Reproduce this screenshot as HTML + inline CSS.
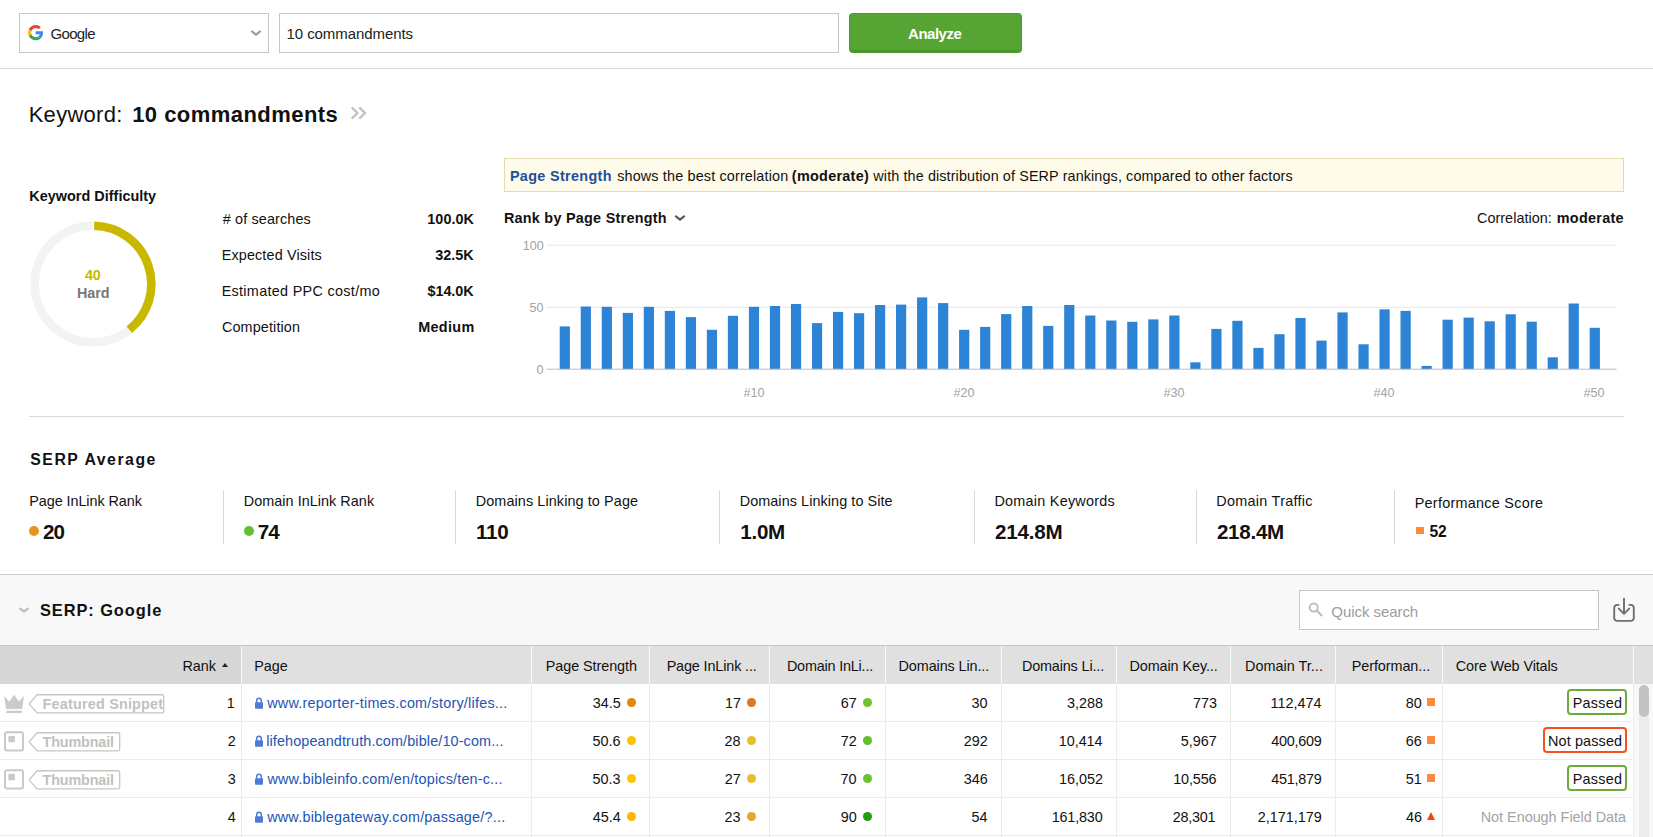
<!DOCTYPE html><html><head><meta charset="utf-8"><title>Keyword Difficulty</title><style>
*{box-sizing:border-box;margin:0;padding:0}
html,body{width:1653px;height:837px;overflow:hidden;background:#fff}
body{font-family:"Liberation Sans",Arial,sans-serif;font-size:14.4px;color:#000;position:relative}
.a{position:absolute}
.t{position:absolute;white-space:nowrap;line-height:1}
b,.b{font-weight:bold}
</style></head><body>
<div class="a" style="left:19px;top:13px;width:250px;height:40px;border:1px solid #c6c6c6;background:#fff"></div>
<svg class="a" style="left:28px;top:25.3px" width="15.3" height="15.3" viewBox="0 0 48 48"><path fill="#EA4335" d="M24 9.5c3.54 0 6.71 1.22 9.21 3.6l6.85-6.85C35.9 2.38 30.47 0 24 0 14.62 0 6.51 5.38 2.56 13.22l7.98 6.19C12.43 13.72 17.74 9.5 24 9.5z"/><path fill="#4285F4" d="M46.98 24.55c0-1.57-.15-3.09-.38-4.55H24v9.02h12.94c-.58 2.96-2.26 5.48-4.78 7.18l7.73 6c4.51-4.18 7.09-10.36 7.09-17.65z"/><path fill="#FBBC05" d="M10.53 28.59c-.48-1.45-.76-2.99-.76-4.59s.27-3.14.76-4.59l-7.98-6.19C.92 16.460 0 20.120 0 24c0 3.880.920 7.540 2.560 10.780l7.970-6.190z"/><path fill="#34A853" d="M24 48c6.480 0 11.930-2.130 15.890-5.810l-7.730-6c-2.150 1.450-4.920 2.300-8.160 2.300-6.260 0-11.570-4.220-13.470-9.910l-7.980 6.190C6.510 42.620 14.620 48 24 48z"/></svg>
<div class="t" style="top:26.30px;font-size:15px;color:#222;letter-spacing:-0.640px;left:50.41px;">Google</div>
<svg class="a" style="left:250px;top:29px" width="12" height="9" viewBox="0 0 12 9"><path d="M2 2.500 L6 5.700 L10 2.500" fill="none" stroke="#9a9a9a" stroke-width="2.2" stroke-linecap="round" stroke-linejoin="round"/></svg>
<div class="a" style="left:279px;top:13px;width:560px;height:40px;border:1px solid #c6c6c6;background:#fff"></div>
<div class="t" style="top:26.30px;font-size:15px;color:#222;letter-spacing:-0.078px;left:286.55px;">10 commandments</div>
<div class="a" style="left:849px;top:13px;width:173px;height:40px;border-radius:3.500px;background:#56a433;border:1px solid #4c962b;box-shadow:inset 0 -2px 0 #4b952c"></div>
<div class="t" style="top:26.30px;font-size:15px;color:#fff;letter-spacing:-0.501px;font-weight:bold;left:908.11px;">Analyze</div>
<div class="a" style="left:0px;top:68px;width:1653px;height:1px;background:#dadada"></div>
<div class="t" style="top:103.68px;font-size:22px;color:#111;letter-spacing:0.284px;left:28.67px;">Keyword:</div>
<div class="t" style="top:103.68px;font-size:22px;color:#111;letter-spacing:0.452px;font-weight:bold;left:132.20px;">10 commandments</div>
<svg class="a" style="left:350px;top:105px" width="18" height="16" viewBox="0 0 18 16"><path d="M2.400 3.100 L7.600 8 L2.400 12.900 M9.900 3.100 L15.100 8 L9.900 12.900" fill="none" stroke="#c2c2c2" stroke-width="2.400" stroke-linecap="round" stroke-linejoin="round"/></svg>
<div class="t" style="top:188.81px;font-size:14.4px;color:#111;letter-spacing:0.023px;font-weight:bold;left:29.36px;">Keyword Difficulty</div>
<svg class="a" style="left:22.600px;top:213.800px" width="140" height="140" viewBox="0 0 140 140"><circle cx="70" cy="70" r="58.300" fill="none" stroke="#f3f3f3" stroke-width="8.600"/><path d="M70 11.700 A58.300 58.300 0 0 1 107.240 114.850" fill="none" stroke="#fff" stroke-width="9.400"/><path d="M71.200 11.710 A58.300 58.300 0 0 1 106.300 115.620" fill="none" stroke="#c8b900" stroke-width="8.600"/></svg>
<div class="t" style="top:267.81px;font-size:14.4px;color:#c8b900;letter-spacing:-0.372px;font-weight:bold;left:85.00px;">40</div>
<div class="t" style="top:285.81px;font-size:14.4px;color:#777;letter-spacing:-0.074px;font-weight:bold;left:77.04px;">Hard</div>
<div class="t" style="top:211.81px;font-size:14.4px;color:#111;letter-spacing:0.139px;left:222.72px;"># of searches</div>
<div class="t" style="top:211.81px;font-size:14.4px;color:#111;letter-spacing:0.046px;font-weight:bold;right:1179.03px;">100.0K</div>
<div class="t" style="top:247.81px;font-size:14.4px;color:#111;letter-spacing:0.141px;left:221.68px;">Expected Visits</div>
<div class="t" style="top:247.81px;font-size:14.4px;color:#111;font-weight:bold;right:1179.30px;">32.5K</div>
<div class="t" style="top:283.81px;font-size:14.4px;color:#111;letter-spacing:0.309px;left:221.64px;">Estimated PPC cost/mo</div>
<div class="t" style="top:283.81px;font-size:14.4px;color:#111;letter-spacing:-0.064px;font-weight:bold;right:1179.44px;">$14.0K</div>
<div class="t" style="top:319.81px;font-size:14.4px;color:#111;letter-spacing:0.121px;left:221.96px;">Competition</div>
<div class="t" style="top:319.81px;font-size:14.4px;color:#111;letter-spacing:0.326px;font-weight:bold;right:1178.48px;">Medium</div>
<div class="a" style="left:504px;top:158px;width:1120px;height:34px;background:#fffbea;border:1px solid #e4dab2"></div>
<div class="t" style="top:169.01px;font-size:14.4px;color:#1f4e9c;letter-spacing:0.331px;font-weight:bold;left:509.91px;">Page Strength</div>
<div class="t" style="top:169.01px;font-size:14.4px;color:#111;letter-spacing:0.154px;left:617.16px;">shows the best correlation</div>
<div class="t" style="top:169.01px;font-size:14.4px;color:#111;letter-spacing:0.283px;font-weight:bold;left:791.87px;">(moderate)</div>
<div class="t" style="top:169.01px;font-size:14.4px;color:#111;letter-spacing:0.106px;left:873.36px;">with the distribution of SERP rankings, compared to other factors</div>
<div class="t" style="top:211.01px;font-size:14.4px;color:#111;letter-spacing:0.260px;font-weight:bold;left:503.88px;">Rank by Page Strength</div>
<svg class="a" style="left:674px;top:214px" width="12" height="8" viewBox="0 0 12 8"><path d="M1.900 2.400 L6 5.700 L10.100 2.400" fill="none" stroke="#5a5a5a" stroke-width="2.300" stroke-linecap="round" stroke-linejoin="round"/></svg>
<div class="t" style="top:211.01px;font-size:14.4px;color:#111;letter-spacing:0.042px;left:1476.97px;">Correlation:</div>
<div class="t" style="top:211.01px;font-size:14.4px;color:#111;letter-spacing:0.272px;font-weight:bold;left:1556.80px;">moderate</div>
<svg class="a" style="left:500px;top:235px" width="1130" height="170" viewBox="0 0 1130 170"><rect x="46.500" y="9.700" width="1070" height="1" fill="#e6e6e6"/><rect x="46.500" y="71.800" width="1070" height="1" fill="#e6e6e6"/><rect x="59.70" y="91.4" width="10.2" height="42.8" fill="#2d83d5"/><rect x="80.72" y="71.5" width="10.2" height="62.7" fill="#2d83d5"/><rect x="101.74" y="71.8" width="10.2" height="62.4" fill="#2d83d5"/><rect x="122.76" y="77.9" width="10.2" height="56.3" fill="#2d83d5"/><rect x="143.78" y="71.8" width="10.2" height="62.4" fill="#2d83d5"/><rect x="164.80" y="75.9" width="10.2" height="58.3" fill="#2d83d5"/><rect x="185.82" y="82.1" width="10.2" height="52.1" fill="#2d83d5"/><rect x="206.84" y="94.8" width="10.2" height="39.4" fill="#2d83d5"/><rect x="227.86" y="80.8" width="10.2" height="53.4" fill="#2d83d5"/><rect x="248.88" y="71.8" width="10.2" height="62.4" fill="#2d83d5"/><rect x="269.90" y="71.0" width="10.2" height="63.2" fill="#2d83d5"/><rect x="290.92" y="69.0" width="10.2" height="65.2" fill="#2d83d5"/><rect x="311.94" y="88.1" width="10.2" height="46.1" fill="#2d83d5"/><rect x="332.96" y="76.9" width="10.2" height="57.3" fill="#2d83d5"/><rect x="353.98" y="78.2" width="10.2" height="56.0" fill="#2d83d5"/><rect x="375.00" y="70.0" width="10.2" height="64.2" fill="#2d83d5"/><rect x="396.02" y="69.6" width="10.2" height="64.6" fill="#2d83d5"/><rect x="417.04" y="62.4" width="10.2" height="71.8" fill="#2d83d5"/><rect x="438.06" y="68.1" width="10.2" height="66.1" fill="#2d83d5"/><rect x="459.08" y="94.8" width="10.2" height="39.4" fill="#2d83d5"/><rect x="480.10" y="91.9" width="10.2" height="42.3" fill="#2d83d5"/><rect x="501.12" y="79.1" width="10.2" height="55.1" fill="#2d83d5"/><rect x="522.14" y="71.0" width="10.2" height="63.2" fill="#2d83d5"/><rect x="543.16" y="90.9" width="10.2" height="43.3" fill="#2d83d5"/><rect x="564.18" y="70.0" width="10.2" height="64.2" fill="#2d83d5"/><rect x="585.20" y="80.5" width="10.2" height="53.7" fill="#2d83d5"/><rect x="606.22" y="85.5" width="10.2" height="48.7" fill="#2d83d5"/><rect x="627.24" y="86.8" width="10.2" height="47.4" fill="#2d83d5"/><rect x="648.26" y="84.4" width="10.2" height="49.8" fill="#2d83d5"/><rect x="669.28" y="80.5" width="10.2" height="53.7" fill="#2d83d5"/><rect x="690.30" y="127.3" width="10.2" height="6.9" fill="#2d83d5"/><rect x="711.32" y="93.9" width="10.2" height="40.3" fill="#2d83d5"/><rect x="732.34" y="85.8" width="10.2" height="48.4" fill="#2d83d5"/><rect x="753.36" y="112.9" width="10.2" height="21.3" fill="#2d83d5"/><rect x="774.38" y="99.2" width="10.2" height="35.0" fill="#2d83d5"/><rect x="795.40" y="83.0" width="10.2" height="51.2" fill="#2d83d5"/><rect x="816.42" y="105.6" width="10.2" height="28.6" fill="#2d83d5"/><rect x="837.44" y="77.4" width="10.2" height="56.8" fill="#2d83d5"/><rect x="858.46" y="109.3" width="10.2" height="24.9" fill="#2d83d5"/><rect x="879.48" y="74.4" width="10.2" height="59.8" fill="#2d83d5"/><rect x="900.50" y="75.9" width="10.2" height="58.3" fill="#2d83d5"/><rect x="921.52" y="130.9" width="10.2" height="3.3" fill="#2d83d5"/><rect x="942.54" y="84.7" width="10.2" height="49.5" fill="#2d83d5"/><rect x="963.56" y="82.6" width="10.2" height="51.6" fill="#2d83d5"/><rect x="984.58" y="86.3" width="10.2" height="47.9" fill="#2d83d5"/><rect x="1005.60" y="79.3" width="10.2" height="54.9" fill="#2d83d5"/><rect x="1026.62" y="86.7" width="10.2" height="47.5" fill="#2d83d5"/><rect x="1047.64" y="122.3" width="10.2" height="11.9" fill="#2d83d5"/><rect x="1068.66" y="68.5" width="10.2" height="65.7" fill="#2d83d5"/><rect x="1089.68" y="92.8" width="10.2" height="41.4" fill="#2d83d5"/><rect x="46.500" y="133.700" width="1070" height="1" fill="#bdbdbd"/></svg>
<div class="t" style="top:239.53px;font-size:12.6px;color:#a2a2a2;right:1109.16px;">100</div>
<div class="t" style="top:301.53px;font-size:12.6px;color:#a2a2a2;right:1109.62px;">50</div>
<div class="t" style="top:363.53px;font-size:12.6px;color:#a2a2a2;right:1109.54px;">0</div>
<div class="t" style="top:386.53px;font-size:12.6px;color:#a2a2a2;left:743.49px;">#10</div>
<div class="t" style="top:386.53px;font-size:12.6px;color:#a2a2a2;left:953.49px;">#20</div>
<div class="t" style="top:386.53px;font-size:12.6px;color:#a2a2a2;left:1163.49px;">#30</div>
<div class="t" style="top:386.53px;font-size:12.6px;color:#a2a2a2;left:1373.49px;">#40</div>
<div class="t" style="top:386.53px;font-size:12.6px;color:#a2a2a2;left:1583.49px;">#50</div>
<div class="a" style="left:29px;top:416px;width:1595px;height:1px;background:#d9d9d9"></div>
<div class="t" style="top:451.63px;font-size:15.8px;color:#111;letter-spacing:1.532px;font-weight:bold;left:30.26px;">SERP Average</div>
<div class="t" style="top:493.81px;font-size:14.4px;color:#111;letter-spacing:-0.055px;left:29.20px;">Page InLink Rank</div>
<div class="a" style="left:29px;top:526px;width:10px;height:10px;border-radius:50%;background:#e4951f"></div>
<div class="t" style="top:521.56px;font-size:20.6px;color:#111;letter-spacing:-1.000px;font-weight:bold;left:43.12px;">20</div>
<div class="t" style="top:493.81px;font-size:14.4px;color:#111;letter-spacing:0.044px;left:243.77px;">Domain InLink Rank</div>
<div class="a" style="left:244px;top:526px;width:10px;height:10px;border-radius:50%;background:#62c032"></div>
<div class="t" style="top:521.56px;font-size:20.6px;color:#111;letter-spacing:-1.000px;font-weight:bold;left:257.87px;">74</div>
<div class="t" style="top:493.81px;font-size:14.4px;color:#111;letter-spacing:0.103px;left:475.74px;">Domains Linking to Page</div>
<div class="t" style="top:521.56px;font-size:20.6px;color:#111;letter-spacing:-0.182px;font-weight:bold;left:475.92px;">110</div>
<div class="t" style="top:493.81px;font-size:14.4px;color:#111;letter-spacing:0.079px;left:739.67px;">Domains Linking to Site</div>
<div class="t" style="top:521.56px;font-size:20.6px;color:#111;letter-spacing:-0.255px;font-weight:bold;left:740.24px;">1.0M</div>
<div class="t" style="top:493.81px;font-size:14.4px;color:#111;letter-spacing:0.251px;left:994.46px;">Domain Keywords</div>
<div class="t" style="top:521.56px;font-size:20.6px;color:#111;letter-spacing:-0.163px;font-weight:bold;left:994.88px;">214.8M</div>
<div class="t" style="top:493.81px;font-size:14.4px;color:#111;letter-spacing:0.288px;left:1216.25px;">Domain Traffic</div>
<div class="t" style="top:521.56px;font-size:20.6px;color:#111;letter-spacing:-0.258px;font-weight:bold;left:1216.88px;">218.4M</div>
<div class="t" style="top:495.81px;font-size:14.4px;color:#111;letter-spacing:0.271px;left:1414.70px;">Performance Score</div>
<div class="a" style="left:1416px;top:526.5px;width:7.5px;height:7.5px;background:#fb8b3c"></div>
<div class="t" style="top:524.29px;font-size:15.6px;color:#111;font-weight:bold;left:1429.44px;">52</div>
<div class="a" style="left:223px;top:490px;width:1px;height:54px;background:#d8d8d8"></div>
<div class="a" style="left:455px;top:490px;width:1px;height:54px;background:#d8d8d8"></div>
<div class="a" style="left:719px;top:490px;width:1px;height:54px;background:#d8d8d8"></div>
<div class="a" style="left:974px;top:490px;width:1px;height:54px;background:#d8d8d8"></div>
<div class="a" style="left:1196px;top:490px;width:1px;height:54px;background:#d8d8d8"></div>
<div class="a" style="left:1394px;top:490px;width:1px;height:54px;background:#d8d8d8"></div>
<div class="a" style="left:0px;top:574px;width:1653px;height:263px;background:#f8f8f8;border-top:1px solid #cbcbcb"></div>
<svg class="a" style="left:18px;top:606px" width="12" height="8" viewBox="0 0 12 8"><path d="M2.100 2.600 L6 5.600 L9.900 2.600" fill="none" stroke="#c0c0c0" stroke-width="2.300" stroke-linecap="round" stroke-linejoin="round"/></svg>
<div class="t" style="top:601.62px;font-size:16.4px;color:#111;letter-spacing:0.938px;font-weight:bold;left:39.92px;">SERP: Google</div>
<div class="a" style="left:1299px;top:590px;width:300px;height:40px;background:#fff;border:1px solid #c6c6c6"></div>
<svg class="a" style="left:1307px;top:601px" width="18" height="18" viewBox="0 0 18 18"><circle cx="6.700" cy="6.600" r="4" fill="none" stroke="#c0c0c0" stroke-width="2"/><path d="M9.700 9.600 L15.200 15" stroke="#c0c0c0" stroke-width="2.300"/></svg>
<div class="t" style="top:604.30px;font-size:15px;color:#9c9c9c;letter-spacing:-0.057px;left:1331.28px;">Quick search</div>
<svg class="a" style="left:1611px;top:596px" width="26" height="28" viewBox="0 0 26 28"><path d="M7.600 8.900 H6.200 A3 3 0 0 0 3.200 11.900 V21.900 A3 3 0 0 0 6.200 24.900 H19.800 A3 3 0 0 0 22.800 21.900 V11.900 A3 3 0 0 0 19.800 8.900 H18.400" fill="none" stroke="#6f6f6f" stroke-width="1.900" stroke-linecap="round"/><path d="M13 2.600 V17.500 M7.800 12.600 L13 17.800 L18.200 12.600" fill="none" stroke="#6f6f6f" stroke-width="1.900" stroke-linecap="round" stroke-linejoin="round"/></svg>
<div class="a" style="left:0px;top:645px;width:1653px;height:39px;background:#e0e0e0;border-top:1px solid #c6c6c6"></div>
<div class="a" style="left:0px;top:646px;width:241px;height:38px;background:#d7d7d7"></div>
<div class="a" style="left:0px;top:684px;width:1634px;height:153px;background:#fff"></div>
<div class="a" style="left:241px;top:646px;width:1px;height:38px;background:#f9f9f9"></div>
<div class="a" style="left:241px;top:684px;width:1px;height:153px;background:#ececec"></div>
<div class="a" style="left:531px;top:646px;width:1px;height:38px;background:#f9f9f9"></div>
<div class="a" style="left:531px;top:684px;width:1px;height:153px;background:#ececec"></div>
<div class="a" style="left:649px;top:646px;width:1px;height:38px;background:#f9f9f9"></div>
<div class="a" style="left:649px;top:684px;width:1px;height:153px;background:#ececec"></div>
<div class="a" style="left:769px;top:646px;width:1px;height:38px;background:#f9f9f9"></div>
<div class="a" style="left:769px;top:684px;width:1px;height:153px;background:#ececec"></div>
<div class="a" style="left:885px;top:646px;width:1px;height:38px;background:#f9f9f9"></div>
<div class="a" style="left:885px;top:684px;width:1px;height:153px;background:#ececec"></div>
<div class="a" style="left:1001px;top:646px;width:1px;height:38px;background:#f9f9f9"></div>
<div class="a" style="left:1001px;top:684px;width:1px;height:153px;background:#ececec"></div>
<div class="a" style="left:1116px;top:646px;width:1px;height:38px;background:#f9f9f9"></div>
<div class="a" style="left:1116px;top:684px;width:1px;height:153px;background:#ececec"></div>
<div class="a" style="left:1230px;top:646px;width:1px;height:38px;background:#f9f9f9"></div>
<div class="a" style="left:1230px;top:684px;width:1px;height:153px;background:#ececec"></div>
<div class="a" style="left:1335px;top:646px;width:1px;height:38px;background:#f9f9f9"></div>
<div class="a" style="left:1335px;top:684px;width:1px;height:153px;background:#ececec"></div>
<div class="a" style="left:1442px;top:646px;width:1px;height:38px;background:#f9f9f9"></div>
<div class="a" style="left:1442px;top:684px;width:1px;height:153px;background:#ececec"></div>
<div class="a" style="left:1633px;top:646px;width:1px;height:38px;background:#f9f9f9"></div>
<div class="a" style="left:1633px;top:684px;width:1px;height:153px;background:#ececec"></div>
<div class="a" style="left:0px;top:721px;width:1634px;height:1px;background:#ececec"></div>
<div class="a" style="left:0px;top:759px;width:1634px;height:1px;background:#ececec"></div>
<div class="a" style="left:0px;top:797px;width:1634px;height:1px;background:#ececec"></div>
<div class="a" style="left:0px;top:835px;width:1634px;height:1px;background:#ececec"></div>
<div class="t" style="top:658.81px;font-size:14.4px;color:#111;left:182.40px;">Rank</div>
<div class="a" style="left:221.800px;top:663px;width:0;height:0;border-left:3.700px solid transparent;border-right:3.700px solid transparent;border-bottom:4.200px solid #222"></div>
<div class="t" style="top:658.81px;font-size:14.4px;color:#111;left:254.24px;">Page</div>
<div class="t" style="top:658.81px;font-size:14.4px;color:#111;letter-spacing:-0.074px;left:545.80px;">Page Strength</div>
<div class="t" style="top:658.81px;font-size:14.4px;color:#111;letter-spacing:-0.129px;left:666.64px;">Page InLink ...</div>
<div class="t" style="top:658.81px;font-size:14.4px;color:#111;letter-spacing:-0.192px;left:786.93px;">Domain InLi...</div>
<div class="t" style="top:658.81px;font-size:14.4px;color:#111;letter-spacing:-0.101px;left:898.58px;">Domains Lin...</div>
<div class="t" style="top:658.81px;font-size:14.4px;color:#111;letter-spacing:-0.144px;left:1021.90px;">Domains Li...</div>
<div class="t" style="top:658.81px;font-size:14.4px;color:#111;letter-spacing:-0.077px;left:1129.42px;">Domain Key...</div>
<div class="t" style="top:658.81px;font-size:14.4px;color:#111;letter-spacing:0.031px;left:1244.97px;">Domain Tr...</div>
<div class="t" style="top:658.81px;font-size:14.4px;color:#111;letter-spacing:-0.065px;left:1351.69px;">Performan...</div>
<div class="t" style="top:658.81px;font-size:14.4px;color:#111;letter-spacing:-0.102px;left:1455.81px;">Core Web Vitals</div>
<div class="t" style="top:695.81px;font-size:14.4px;color:#111;right:1418.36px;">1</div>
<svg class="a" style="left:254px;top:696.5px" width="10" height="13" viewBox="0 0 10 13"><path d="M2.700 5.800 V3.600 A2.300 2.300 0 0 1 7.300 3.600 V5.800" fill="none" stroke="#4d7bd6" stroke-width="1.500"/><rect x="1" y="5.300" width="8" height="6.500" rx="0.800" fill="#4d7bd6"/></svg>
<div class="t" style="top:695.81px;font-size:14.4px;color:#2354b4;letter-spacing:0.226px;left:267.24px;">www.reporter-times.com/story/lifes...</div>
<div class="t" style="top:695.81px;font-size:14.4px;color:#111;right:1032.32px;">34.5</div>
<div class="a" style="left:627.1px;top:698.1px;width:8.8px;height:8.8px;border-radius:50%;background:#e5870b"></div>
<div class="t" style="top:695.81px;font-size:14.4px;color:#111;right:912.09px;">17</div>
<div class="a" style="left:747.2px;top:698.1px;width:8.8px;height:8.8px;border-radius:50%;background:#dd7a1d"></div>
<div class="t" style="top:695.81px;font-size:14.4px;color:#111;right:796.21px;">67</div>
<div class="a" style="left:862.9px;top:698.1px;width:8.8px;height:8.8px;border-radius:50%;background:#70c42c"></div>
<div class="t" style="top:695.81px;font-size:14.4px;color:#111;right:665.58px;">30</div>
<div class="t" style="top:695.81px;font-size:14.4px;color:#111;right:549.94px;">3,288</div>
<div class="t" style="top:695.81px;font-size:14.4px;color:#111;right:436.01px;">773</div>
<div class="t" style="top:695.81px;font-size:14.4px;color:#111;letter-spacing:0.007px;right:331.51px;">112,474</div>
<div class="t" style="top:695.81px;font-size:14.4px;color:#111;right:231.15px;">80</div>
<div class="a" style="left:1427.3px;top:698.3px;width:7.8px;height:7.9px;background:#fb8b3c"></div>
<div class="a" style="left:1567px;top:689.4px;width:60px;height:25.3px;border:2px solid #6cab3c;border-radius:4px;background:#fff"></div>
<div class="t" style="top:695.81px;font-size:14.4px;color:#111;letter-spacing:0.270px;right:30.73px;">Passed</div>
<div class="t" style="top:733.81px;font-size:14.4px;color:#111;right:1417.26px;">2</div>
<svg class="a" style="left:254px;top:734.5px" width="10" height="13" viewBox="0 0 10 13"><path d="M2.700 5.800 V3.600 A2.300 2.300 0 0 1 7.300 3.600 V5.800" fill="none" stroke="#4d7bd6" stroke-width="1.500"/><rect x="1" y="5.300" width="8" height="6.500" rx="0.800" fill="#4d7bd6"/></svg>
<div class="t" style="top:733.81px;font-size:14.4px;color:#2354b4;letter-spacing:0.126px;left:266.20px;">lifehopeandtruth.com/bible/10-com...</div>
<div class="t" style="top:733.81px;font-size:14.4px;color:#111;right:1032.39px;">50.6</div>
<div class="a" style="left:627.1px;top:736.1px;width:8.8px;height:8.8px;border-radius:50%;background:#fcc403"></div>
<div class="t" style="top:733.81px;font-size:14.4px;color:#111;right:912.39px;">28</div>
<div class="a" style="left:747.2px;top:736.1px;width:8.8px;height:8.8px;border-radius:50%;background:#e8be2e"></div>
<div class="t" style="top:733.81px;font-size:14.4px;color:#111;right:796.15px;">72</div>
<div class="a" style="left:862.9px;top:736.1px;width:8.8px;height:8.8px;border-radius:50%;background:#5fbf2d"></div>
<div class="t" style="top:733.81px;font-size:14.4px;color:#111;right:665.19px;">292</div>
<div class="t" style="top:733.81px;font-size:14.4px;color:#111;letter-spacing:-0.062px;right:550.52px;">10,414</div>
<div class="t" style="top:733.81px;font-size:14.4px;color:#111;right:436.32px;">5,967</div>
<div class="t" style="top:733.81px;font-size:14.4px;color:#111;letter-spacing:-0.226px;right:331.40px;">400,609</div>
<div class="t" style="top:733.81px;font-size:14.4px;color:#111;right:231.16px;">66</div>
<div class="a" style="left:1427.3px;top:736.3px;width:7.8px;height:7.9px;background:#fb8b3c"></div>
<div class="a" style="left:1543px;top:727.4px;width:84px;height:25.3px;border:2px solid #f5511e;border-radius:4px;background:#fff"></div>
<div class="t" style="top:733.81px;font-size:14.4px;color:#111;letter-spacing:0.150px;right:30.75px;">Not passed</div>
<div class="t" style="top:771.81px;font-size:14.4px;color:#111;right:1417.31px;">3</div>
<svg class="a" style="left:254px;top:772.5px" width="10" height="13" viewBox="0 0 10 13"><path d="M2.700 5.800 V3.600 A2.300 2.300 0 0 1 7.300 3.600 V5.800" fill="none" stroke="#4d7bd6" stroke-width="1.500"/><rect x="1" y="5.300" width="8" height="6.500" rx="0.800" fill="#4d7bd6"/></svg>
<div class="t" style="top:771.81px;font-size:14.4px;color:#2354b4;letter-spacing:0.181px;left:267.39px;">www.bibleinfo.com/en/topics/ten-c...</div>
<div class="t" style="top:771.81px;font-size:14.4px;color:#111;right:1032.39px;">50.3</div>
<div class="a" style="left:627.1px;top:774.1px;width:8.8px;height:8.8px;border-radius:50%;background:#fcc403"></div>
<div class="t" style="top:771.81px;font-size:14.4px;color:#111;right:912.35px;">27</div>
<div class="a" style="left:747.2px;top:774.1px;width:8.8px;height:8.8px;border-radius:50%;background:#e8be2e"></div>
<div class="t" style="top:771.81px;font-size:14.4px;color:#111;right:796.41px;">70</div>
<div class="a" style="left:862.9px;top:774.1px;width:8.8px;height:8.8px;border-radius:50%;background:#6cc22f"></div>
<div class="t" style="top:771.81px;font-size:14.4px;color:#111;right:665.22px;">346</div>
<div class="t" style="top:771.81px;font-size:14.4px;color:#111;letter-spacing:0.007px;right:550.03px;">16,052</div>
<div class="t" style="top:771.81px;font-size:14.4px;color:#111;letter-spacing:-0.125px;right:436.57px;">10,556</div>
<div class="t" style="top:771.81px;font-size:14.4px;color:#111;letter-spacing:-0.226px;right:331.40px;">451,879</div>
<div class="t" style="top:771.81px;font-size:14.4px;color:#111;right:231.15px;">51</div>
<div class="a" style="left:1427.3px;top:774.3px;width:7.8px;height:7.9px;background:#fb8b3c"></div>
<div class="a" style="left:1567px;top:765.4px;width:60px;height:25.3px;border:2px solid #6cab3c;border-radius:4px;background:#fff"></div>
<div class="t" style="top:771.81px;font-size:14.4px;color:#111;letter-spacing:0.270px;right:30.73px;">Passed</div>
<div class="t" style="top:809.81px;font-size:14.4px;color:#111;right:1417.22px;">4</div>
<svg class="a" style="left:254px;top:810.5px" width="10" height="13" viewBox="0 0 10 13"><path d="M2.700 5.800 V3.600 A2.300 2.300 0 0 1 7.300 3.600 V5.800" fill="none" stroke="#4d7bd6" stroke-width="1.500"/><rect x="1" y="5.300" width="8" height="6.500" rx="0.800" fill="#4d7bd6"/></svg>
<div class="t" style="top:809.81px;font-size:14.4px;color:#2354b4;letter-spacing:0.225px;left:267.13px;">www.biblegateway.com/passage/?...</div>
<div class="t" style="top:809.81px;font-size:14.4px;color:#111;right:1032.24px;">45.4</div>
<div class="a" style="left:627.1px;top:812.1px;width:8.8px;height:8.8px;border-radius:50%;background:#fbb704"></div>
<div class="t" style="top:809.81px;font-size:14.4px;color:#111;right:912.39px;">23</div>
<div class="a" style="left:747.2px;top:812.1px;width:8.8px;height:8.8px;border-radius:50%;background:#e6a82c"></div>
<div class="t" style="top:809.81px;font-size:14.4px;color:#111;right:796.29px;">90</div>
<div class="a" style="left:862.9px;top:812.1px;width:8.8px;height:8.8px;border-radius:50%;background:#22a010"></div>
<div class="t" style="top:809.81px;font-size:14.4px;color:#111;right:665.50px;">54</div>
<div class="t" style="top:809.81px;font-size:14.4px;color:#111;letter-spacing:-0.158px;right:550.44px;">161,830</div>
<div class="t" style="top:809.81px;font-size:14.4px;color:#111;letter-spacing:-0.261px;right:437.71px;">28,301</div>
<div class="t" style="top:809.81px;font-size:14.4px;color:#111;letter-spacing:-0.013px;right:331.26px;">2,171,179</div>
<div class="t" style="top:809.81px;font-size:14.4px;color:#111;right:231.04px;">46</div>
<div class="a" style="left:1426.500px;top:811.6px;width:0;height:0;border-left:4.500px solid transparent;border-right:4.500px solid transparent;border-bottom:8.700px solid #f4450f"></div>
<div class="t" style="top:809.81px;font-size:14.4px;color:#a3a3a3;letter-spacing:-0.010px;right:26.92px;">Not Enough Field Data</div>
<svg class="a" style="left:3px;top:693px" width="22" height="22" viewBox="0 0 22 22"><path d="M1.200 3 L6.300 8.600 L11.100 1.700 L15.900 8.600 L21 3 L19.200 16 H3 Z" fill="#cbcbcb"/><rect x="3.300" y="17.700" width="15.600" height="2.400" fill="#cbcbcb"/></svg>
<svg class="a" style="left:28px;top:693px" width="137.8" height="22" viewBox="0 0 137.8 22"><path d="M9 1.750 H134.3 A1.500 1.500 0 0 1 135.8 3.250 V18.450 A1.500 1.500 0 0 1 134.3 19.950 H9 L1.200 10.850 Z" fill="#fff" stroke="#c6c6c6" stroke-width="1.300" stroke-linejoin="round"/></svg>
<div class="a" style="left:40px;top:688px;width:123.19999999999999px;height:30px;overflow:hidden">
<div class="t" style="top:9.01px;font-size:14.4px;color:#c1c1c1;letter-spacing:0.200px;font-weight:bold;left:2.57px;">Featured Snippet</div>
</div>
<svg class="a" style="left:3px;top:729.8px" width="22" height="23" viewBox="0 0 22 23"><rect x="2" y="2.200" width="18" height="18.200" rx="2" fill="#fff" stroke="#c9c9c9" stroke-width="2"/><rect x="5.400" y="5.900" width="6.500" height="6.300" fill="#c9c9c9"/></svg>
<svg class="a" style="left:28px;top:731px" width="93.7" height="22" viewBox="0 0 93.7 22"><path d="M9 1.750 H90.2 A1.500 1.500 0 0 1 91.7 3.250 V18.450 A1.500 1.500 0 0 1 90.2 19.950 H9 L1.200 10.850 Z" fill="#fff" stroke="#c6c6c6" stroke-width="1.300" stroke-linejoin="round"/></svg>
<div class="t" style="top:735.01px;font-size:14.4px;color:#c1c1c1;letter-spacing:-0.175px;font-weight:bold;left:42.62px;">Thumbnail</div>
<svg class="a" style="left:3px;top:767.8px" width="22" height="23" viewBox="0 0 22 23"><rect x="2" y="2.200" width="18" height="18.200" rx="2" fill="#fff" stroke="#c9c9c9" stroke-width="2"/><rect x="5.400" y="5.900" width="6.500" height="6.300" fill="#c9c9c9"/></svg>
<svg class="a" style="left:28px;top:769px" width="93.7" height="22" viewBox="0 0 93.7 22"><path d="M9 1.750 H90.2 A1.500 1.500 0 0 1 91.7 3.250 V18.450 A1.500 1.500 0 0 1 90.2 19.950 H9 L1.200 10.850 Z" fill="#fff" stroke="#c6c6c6" stroke-width="1.300" stroke-linejoin="round"/></svg>
<div class="t" style="top:773.01px;font-size:14.4px;color:#c1c1c1;letter-spacing:-0.175px;font-weight:bold;left:42.62px;">Thumbnail</div>
<div class="a" style="left:1634px;top:684px;width:19px;height:153px;background:#f8f8f8"></div>
<div class="a" style="left:1639px;top:690px;width:10px;height:147px;background:#ececec"></div>
<div class="a" style="left:1639px;top:685px;width:10px;height:32px;border-radius:5px;background:#c2c2c2"></div>
</body></html>
